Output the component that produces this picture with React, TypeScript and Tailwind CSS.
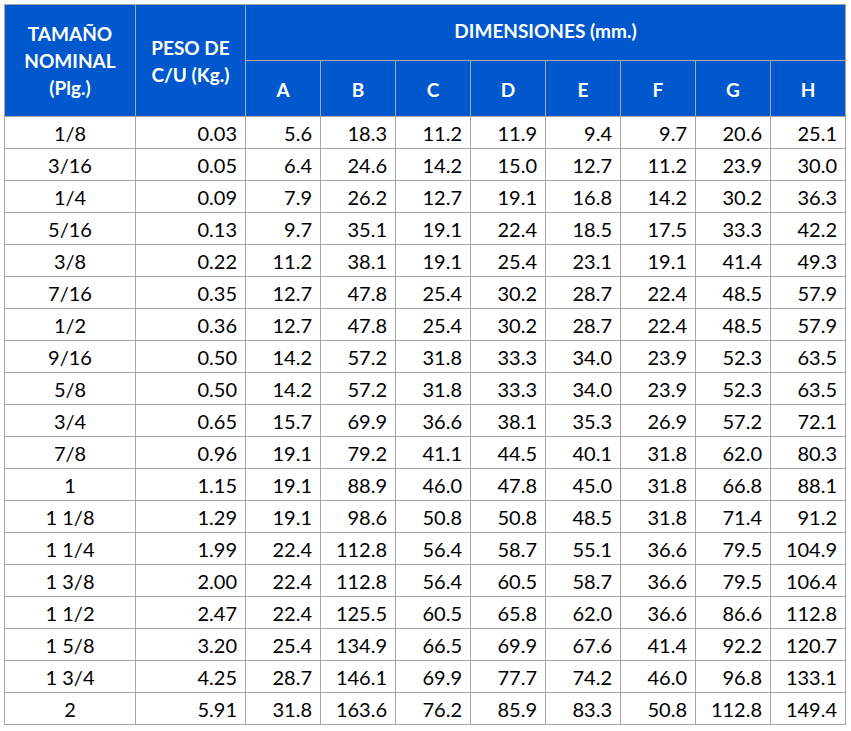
import React from "react";

const rows: string[][] = [
  ["1/8", "0.03", "5.6", "18.3", "11.2", "11.9", "9.4", "9.7", "20.6", "25.1"],
  ["3/16", "0.05", "6.4", "24.6", "14.2", "15.0", "12.7", "11.2", "23.9", "30.0"],
  ["1/4", "0.09", "7.9", "26.2", "12.7", "19.1", "16.8", "14.2", "30.2", "36.3"],
  ["5/16", "0.13", "9.7", "35.1", "19.1", "22.4", "18.5", "17.5", "33.3", "42.2"],
  ["3/8", "0.22", "11.2", "38.1", "19.1", "25.4", "23.1", "19.1", "41.4", "49.3"],
  ["7/16", "0.35", "12.7", "47.8", "25.4", "30.2", "28.7", "22.4", "48.5", "57.9"],
  ["1/2", "0.36", "12.7", "47.8", "25.4", "30.2", "28.7", "22.4", "48.5", "57.9"],
  ["9/16", "0.50", "14.2", "57.2", "31.8", "33.3", "34.0", "23.9", "52.3", "63.5"],
  ["5/8", "0.50", "14.2", "57.2", "31.8", "33.3", "34.0", "23.9", "52.3", "63.5"],
  ["3/4", "0.65", "15.7", "69.9", "36.6", "38.1", "35.3", "26.9", "57.2", "72.1"],
  ["7/8", "0.96", "19.1", "79.2", "41.1", "44.5", "40.1", "31.8", "62.0", "80.3"],
  ["1", "1.15", "19.1", "88.9", "46.0", "47.8", "45.0", "31.8", "66.8", "88.1"],
  ["1 1/8", "1.29", "19.1", "98.6", "50.8", "50.8", "48.5", "31.8", "71.4", "91.2"],
  ["1 1/4", "1.99", "22.4", "112.8", "56.4", "58.7", "55.1", "36.6", "79.5", "104.9"],
  ["1 3/8", "2.00", "22.4", "112.8", "56.4", "60.5", "58.7", "36.6", "79.5", "106.4"],
  ["1 1/2", "2.47", "22.4", "125.5", "60.5", "65.8", "62.0", "36.6", "86.6", "112.8"],
  ["1 5/8", "3.20", "25.4", "134.9", "66.5", "69.9", "67.6", "41.4", "92.2", "120.7"],
  ["1 3/4", "4.25", "28.7", "146.1", "69.9", "77.7", "74.2", "46.0", "96.8", "133.1"],
  ["2", "5.91", "31.8", "163.6", "76.2", "85.9", "83.3", "50.8", "112.8", "149.4"],
];

const letters = ["A", "B", "C", "D", "E", "F", "G", "H"];

export default function App() {
  return (
    <div className="w-[851px] h-[731px] bg-white pt-[4px] pl-[4px]" style={{ fontFamily: "Lato, 'Open Sans', sans-serif" }}>
      <div className="grid w-[842px] grid-cols-[131px_110px_repeat(8,75px)] grid-rows-[56px_56px_repeat(19,32px)] border-l border-t border-[#a6a6a6] text-black">
        <div className="row-span-2 flex flex-col items-center justify-center border-r border-b border-[#a6a6a6] bg-[#0058cc] text-[19px] font-bold leading-[27px] text-white">
          <span>TAMAÑO</span>
          <span>NOMINAL</span>
          <span>(Plg.)</span>
        </div>
        <div className="row-span-2 flex flex-col items-center justify-center border-r border-b border-[#a6a6a6] bg-[#0058cc] text-[19px] font-bold leading-[27px] text-white">
          <span>PESO DE</span>
          <span>C/U (Kg.)</span>
        </div>
        <div className="col-span-8 flex items-center justify-center border-r border-b border-[#a6a6a6] bg-[#0058cc] pb-[2px] text-[19px] font-bold text-white">
          DIMENSIONES (mm.)
        </div>
        {letters.map((l) => (
          <div key={l} className="flex items-center justify-center border-r border-b border-[#a6a6a6] bg-[#0058cc] pt-[4px] text-[19px] font-bold text-white">
            {l}
          </div>
        ))}
        {rows.map((r, i) =>
          r.map((v, j) => (
            <div
              key={`${i}-${j}`}
              className={
                j === 0
                  ? "flex items-center justify-center border-r border-b border-[#a6a6a6] text-[20px]"
                  : "flex items-center justify-end border-r border-b border-[#a6a6a6] pr-[8px] text-[20px]"
              }
            >
              {v}
            </div>
          ))
        )}
      </div>
    </div>
  );
}
